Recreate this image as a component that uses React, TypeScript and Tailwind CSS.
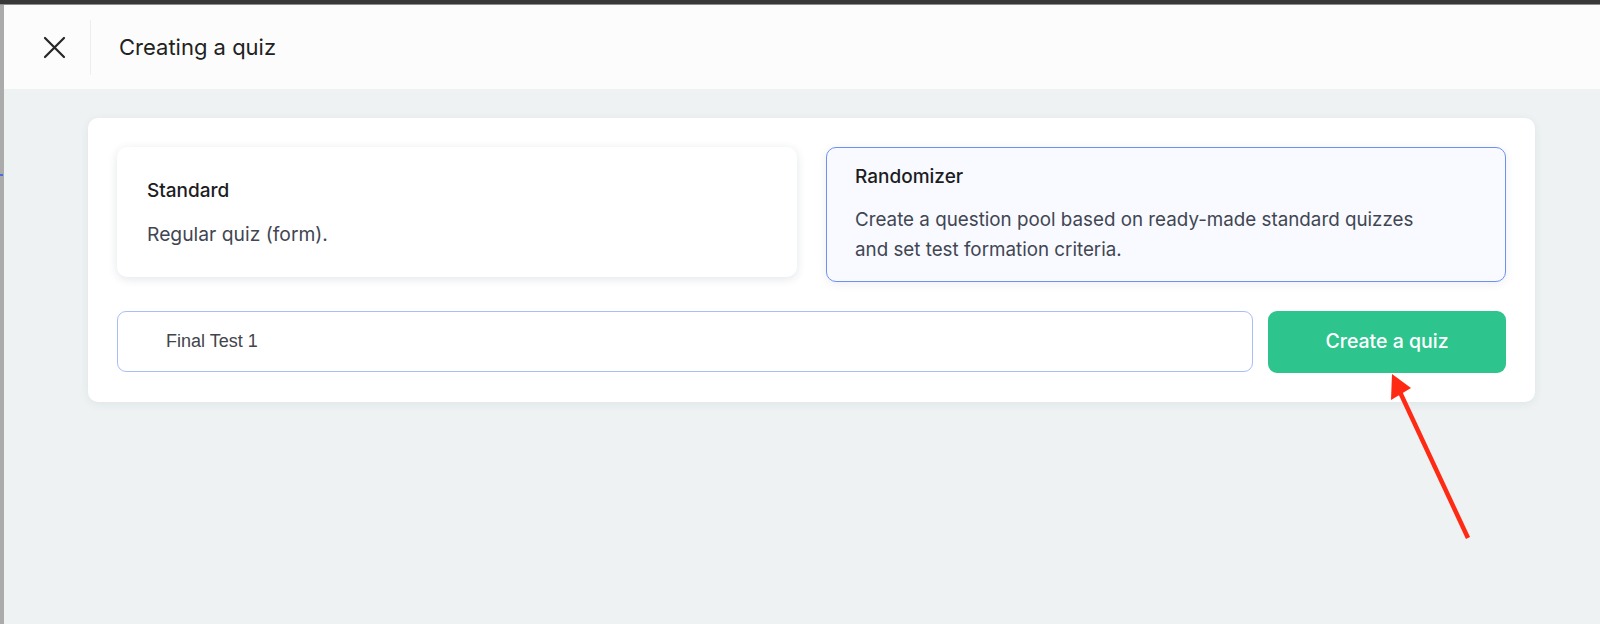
import React from "react";

export default function App() {
  return (
    <div className="relative w-[1600px] h-[624px] overflow-hidden bg-[#eef2f3] flex flex-col font-['Inter','Noto_Sans',sans-serif]">
      <div className="h-[4px] bg-[#383838] border-b border-[#8c8c8c] box-content shrink-0" />
      <div className="flex flex-1 min-h-0">
        <div className="relative w-[4px] bg-[#ababab] shrink-0">
          <div className="absolute top-[169px] left-0 w-[3px] h-[2px] bg-[#4a6ee0]" />
        </div>
        <div className="flex-1 flex flex-col min-w-0">
          <header className="h-[84px] bg-[#fcfcfc] flex items-center shrink-0">
            <div className="w-[86px] h-full flex items-center pl-[39px]">
              <svg width="23" height="23" viewBox="0 0 23 23" fill="none" stroke="#262626" strokeWidth="2.2" strokeLinecap="round">
                <path d="M2 2 L21 21 M21 2 L2 21" />
              </svg>
            </div>
            <div className="w-px h-[55px] bg-[#eeeeee]" />
            <h1 className="ml-[28px] text-[22px] leading-none text-[#222] font-normal">Creating a quiz</h1>
          </header>
          <main className="flex-1 pt-[29px]">
            <div className="ml-[84px] w-[1447px] bg-white rounded-[10px] shadow-[0_2px_10px_rgba(30,50,80,0.07)] p-[29px] flex flex-col gap-[29px]">
              <div className="grid grid-cols-2 gap-[29px] items-start">
                <div className="h-[130px] rounded-[10px] bg-white shadow-[0_2px_10px_rgba(20,40,80,0.12)] px-[30px] pt-[31px]">
                  <div className="text-[19px] leading-[26px] text-[#1d1d1f] font-medium">Standard</div>
                  <div className="mt-[15px] text-[19.3px] leading-[30px] text-[#414652]">Regular quiz (form).</div>
                </div>
                <div className="rounded-[10px] bg-[#f8faff] border border-[#6f8ff3] shadow-[0_2px_10px_rgba(20,40,80,0.08)] px-[28px] pt-[16px] pb-[16px]">
                  <div className="text-[19px] leading-[26px] text-[#1d1d1f] font-medium">Randomizer</div>
                  <div className="mt-[15px] text-[18.8px] leading-[30px] text-[#414652]">
                    Create a question pool based on ready-made standard quizzes
                    <br />
                    and set test formation criteria.
                  </div>
                </div>
              </div>
              <div className="flex gap-[15px]">
                <div className="flex-1 h-[61px] rounded-[9px] border border-[#a9bdfb] flex items-center pl-[48px]">
                  <span className="text-[18px] text-[#41444b] font-['Liberation_Sans',Arial,sans-serif]">Final Test 1</span>
                </div>
                <button className="w-[238px] h-[62px] rounded-[9px] bg-[#2ec48d] text-white text-[19.5px] font-medium">
                  Create a quiz
                </button>
              </div>
            </div>
          </main>
        </div>
      </div>
      <svg className="absolute left-0 top-0 pointer-events-none" width="1600" height="624" viewBox="0 0 1600 624">
        <line x1="1468" y1="538" x2="1399" y2="390" stroke="#ff2a14" strokeWidth="4.5" />
        <polygon points="1392,374 1391,400 1411,388" fill="#ff2a14" />
      </svg>
    </div>
  );
}
